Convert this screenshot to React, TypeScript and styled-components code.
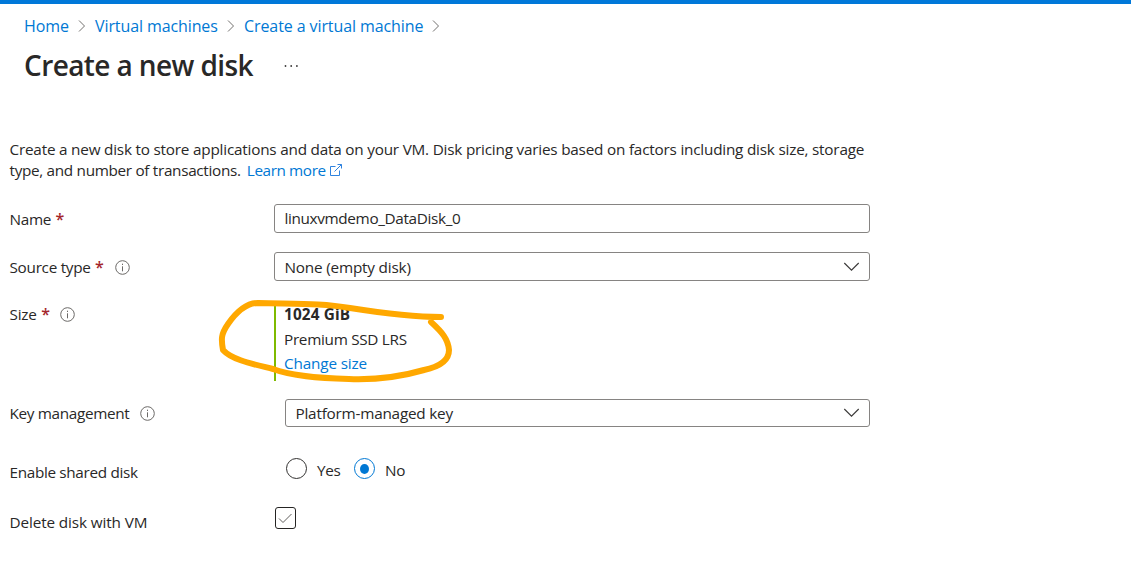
import React from "react";
import styled, { createGlobalStyle } from "styled-components";

const GlobalStyle = createGlobalStyle`
  *, *::before, *::after { box-sizing: border-box; }
  body {
    margin: 0;
    background: #fff;
    color: #292827;
    font-family: "Open Sans", "Noto Sans", sans-serif;
    font-size: 15.3px;
    overflow: hidden;
  }
`;

const Page = styled.div`
  position: relative;
  width: 1131px;
  height: 585px;
  border-top: 4px solid #0078d9;
`;

const Text = styled.span<{ $track?: number }>`
  white-space: pre;
  letter-spacing: ${(p) => p.$track ?? -0.2}px;
`;

const Crumbs = styled.nav`
  display: flex;
  align-items: center;
  height: 24px;
  margin: 10px 0 0 24px;
  padding-bottom: 1px;
  font-size: 16px;
`;

const Link = styled.a<{ $track?: number; $width?: number }>`
  color: #0078d4;
  white-space: pre;
  text-decoration: none;
  letter-spacing: ${(p) => p.$track ?? -0.2}px;
  ${(p) => p.$width && `width: ${p.$width}px;`}
`;

const CrumbArrow = styled.svg`
  width: 8px;
  height: 12px;
  margin: 0 9px;
  flex: none;
`;

const TitleRow = styled.header`
  display: flex;
  align-items: center;
  height: 44px;
  margin: 5px 0 0 24px;
`;

const Title = styled.h1`
  width: 260px;
  margin: 0;
  font-size: 28px;
  font-weight: 600;
  line-height: 44px;
  letter-spacing: -0.6px;
  white-space: pre;
`;

const Dots = styled.svg`
  width: 15px;
  height: 4px;
  margin-top: 2px;
`;

const Description = styled.p`
  margin: 52px 0 0 9.5px;
  line-height: 21px;
`;

const Line = styled.span`
  display: flex;
  align-items: center;
  height: 21px;
`;

const LearnMore = styled(Link)`
  margin-left: 2.5px;
`;

const LearnIcon = styled.svg`
  width: 14px;
  height: 14px;
  margin: -1px 0 0 3.5px;
`;

const Form = styled.form`
  display: flex;
  flex-direction: column;
  margin: 23px 0 0 9.5px;
  width: 860.5px;
`;

const Row = styled.div<{ $height: number; $gap: number }>`
  display: flex;
  align-items: flex-start;
  height: ${(p) => p.$height}px;
  margin-bottom: ${(p) => p.$gap}px;
`;

const Label = styled.div<{ $drop?: number }>`
  display: flex;
  align-items: center;
  flex: none;
  width: 264.5px;
  height: 28px;
  padding-top: ${(p) => p.$drop ?? 0}px;
`;

const SizeLabel = styled(Label)`
  height: 26px;
`;

const Required = styled.span`
  margin-left: 4.5px;
  color: #a4262c;
  font-size: 16px;
  font-weight: 600;
  line-height: 20px;
`;

const InfoIcon = styled.svg<{ $gap: number }>`
  width: 15px;
  height: 15px;
  margin: 1px 0 0 ${(p) => p.$gap}px;
`;

const Field = styled.div<{ $indent?: number; $lift?: number }>`
  display: flex;
  flex: 1;
  align-items: center;
  justify-content: space-between;
  height: 100%;
  margin-left: ${(p) => p.$indent ?? 0}px;
  padding: 0 9px ${(p) => p.$lift ?? 0}px 9.5px;
  border: 1px solid #868482;
  border-radius: 3px;
  line-height: 20px;
`;

const Chevron = styled.svg`
  width: 17px;
  height: 10px;
`;

const SizeBlock = styled.div`
  display: flex;
  flex-direction: column;
  height: 80px;
  padding: 1px 0 0 8px;
  border-left: 2px solid #7fba00;
`;

const SizeLine = styled.div<{ $height: number }>`
  height: ${(p) => p.$height}px;
  line-height: 24px;
`;

const Strong = styled.strong`
  font-weight: 700;
  letter-spacing: 0.15px;
`;

const Radios = styled.div`
  display: flex;
  align-items: flex-start;
  height: 22px;
  margin-left: 11.5px;
`;

const Radio = styled.span<{ $on?: boolean }>`
  display: grid;
  place-items: center;
  flex: none;
  width: 21px;
  height: 21px;
  border: 1px solid ${(p) => (p.$on ? "#0078d4" : "#323130")};
  border-radius: 50%;

  &::after {
    content: "";
    width: 9px;
    height: 10px;
    border-radius: 50%;
    background: ${(p) => (p.$on ? "#0078d4" : "transparent")};
  }
`;

const RadioText = styled.span<{ $width: number }>`
  width: ${(p) => p.$width}px;
  padding: 1px 0 0 10.5px;
  line-height: 22px;
  letter-spacing: -0.35px;
`;

const Checkbox = styled.span`
  display: grid;
  place-items: center;
  width: 21px;
  height: 22px;
  margin-left: 1px;
  border: 1px solid #252423;
  border-radius: 3px;
`;

const Marker = styled.svg`
  position: absolute;
  left: 210px;
  top: 286px;
  width: 250px;
  height: 100px;
  pointer-events: none;
`;

const Arrow = () => (
  <CrumbArrow viewBox="0 0 8 12" fill="none" stroke="#73716f">
    <path d="M1 .5 6.5 6 1 11.5" />
  </CrumbArrow>
);

const Info = ({ gap }: { gap: number }) => (
  <InfoIcon $gap={gap} viewBox="0 0 15 15" fill="none" stroke="#6b6967">
    <circle cx="7.5" cy="7.5" r="6.8" />
    <path d="M7.5 6.3v5M7.5 3.7v1.3" />
  </InfoIcon>
);

const Down = () => (
  <Chevron viewBox="0 0 17 10" fill="none" stroke="#3b3a39" strokeWidth="1.15">
    <path d="m1.3 1 7.2 7.2L15.7 1" />
  </Chevron>
);

export default function App() {
  return (
    <Page>
      <GlobalStyle />
      <Crumbs>
        <Link $width={45} $track={-0.1}>Home</Link>
        <Arrow />
        <Link $width={123} $track={-0.1}>Virtual machines</Link>
        <Arrow />
        <Link $width={179} $track={-0.09}>Create a virtual machine</Link>
        <Arrow />
      </Crumbs>
      <TitleRow>
        <Title>Create a new disk</Title>
        <Dots viewBox="0 0 15 4" fill="#3b3a39">
          <circle cx="1.5" cy="2" r=".9" />
          <circle cx="7.2" cy="2" r=".9" />
          <circle cx="12.9" cy="2" r=".9" />
        </Dots>
      </TitleRow>
      <Description>
        <Line>
          <Text $track={-0.21}>Create a new disk to store applications and data on your VM. Disk pricing varies based on factors including disk size, storage</Text>
        </Line>
        <Line>
          <Text $track={-0.315}>type, and number of transactions. </Text>
          <LearnMore $track={-0.4}>Learn more</LearnMore>
          <LearnIcon viewBox="0 0 14 14" fill="none" stroke="#2f83df">
            <path d="M6.5 3.5h-5v9h9V7.5M8.5 1.5h4V5.5M12.5 1.5 5.5 8.5" />
          </LearnIcon>
        </Line>
      </Description>
      <Form>
        <Row $height={29} $gap={19}>
          <Label $drop={1}>
            <Text $track={-0.3}>Name</Text>
            <Required>*</Required>
          </Label>
          <Field $lift={2}>
            <Text $track={-0.35}>linuxvmdemo_DataDisk_0</Text>
          </Field>
        </Row>
        <Row $height={29} $gap={20}>
          <Label $drop={1}>
            <Text $track={-0.28}>Source type</Text>
            <Required>*</Required>
            <Info gap={11} />
          </Label>
          <Field>
            <Text $track={-0.19}>None (empty disk)</Text>
            <Down />
          </Field>
        </Row>
        <Row $height={80} $gap={18}>
          <SizeLabel>
            <Text>Size</Text>
            <Required>*</Required>
            <Info gap={10.5} />
          </SizeLabel>
          <SizeBlock>
            <SizeLine $height={25}>
              <Strong>1024 GiB</Strong>
            </SizeLine>
            <SizeLine $height={24}>
              <Text $track={-0.3}>Premium SSD LRS</Text>
            </SizeLine>
            <SizeLine $height={24}>
              <Link $track={-0.15}>Change size</Link>
            </SizeLine>
          </SizeBlock>
        </Row>
        <Row $height={28} $gap={31}>
          <Label>
            <Text $track={-0.33}>Key management</Text>
            <Info gap={10.5} />
          </Label>
          <Field $indent={11}>
            <Text $track={-0.22}>Platform-managed key</Text>
            <Down />
          </Field>
        </Row>
        <Row $height={22} $gap={27}>
          <Label>
            <Text $track={-0.33}>Enable shared disk</Text>
          </Label>
          <Radios>
            <Radio />
            <RadioText $width={47}>Yes</RadioText>
            <Radio $on />
            <RadioText $width={40}>No</RadioText>
          </Radios>
        </Row>
        <Row $height={22} $gap={0}>
          <Label $drop={2}>
            <Text $track={-0.12}>Delete disk with VM</Text>
          </Label>
          <Checkbox>
            <svg width="15" height="12" viewBox="0 0 15 12" fill="none" stroke="#605e5c">
              <path d="m1 6.5 4 4 8.5-8.5" />
            </svg>
          </Checkbox>
        </Row>
      </Form>
      <Marker viewBox="0 0 250 100" fill="none" stroke="#ffa800" strokeWidth="6" strokeLinecap="round" strokeLinejoin="round">
        <path d="M231 27 C205 27 172 23 140 18 C112 13 86 14 48 13 C36 13 25 24 18 34 C11 44 11 49 13 60 C22 70 43 74 63 79 C82 86 107 88 139 89 C166 90 190 87 214 80 C233 76 239 69 239 60 C238 49 232 42 221 32" />
      </Marker>
    </Page>
  );
}
